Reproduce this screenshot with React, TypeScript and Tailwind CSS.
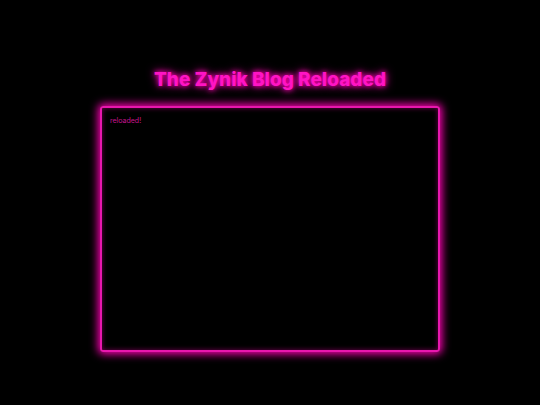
import React from 'react';

export default function App() {
  return (
    <div className="w-[540px] h-[405px] bg-black flex flex-col items-center pt-[67px]" style={{ fontFamily: 'Inter, "Liberation Sans", sans-serif' }}>
      <h1 className="text-[19px] leading-[26px] font-extrabold text-[#ff14c4] [text-shadow:0_0_5px_#ff00b4,0_0_10px_#ff00b4]">
        The Zynik Blog Reloaded
      </h1>
      <div className="mt-[13px] w-[340px] h-[246px] border-2 border-[#e817ae] rounded-[3px] shadow-[0_0_8px_2px_#ff00b4,inset_0_0_5px_#ff00b470] px-[8px] py-[8px]">
        <p className="text-[7px] leading-[10px] text-[#c8148f]">reloaded!</p>
      </div>
    </div>
  );
}
